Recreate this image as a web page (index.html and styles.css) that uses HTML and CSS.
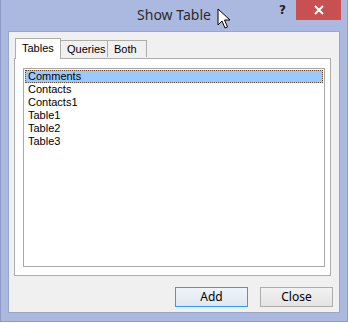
FILE: index.html
```html
<!DOCTYPE html>
<html lang="en">
<head>
    <meta charset="UTF-8">
    <title>Show Table</title>
    <link rel="stylesheet" href="styles.css">
</head>
<body>

    <div class="window">
        <div class="titlebar">
            <span class="title">Show Table</span>
            <span class="help">?</span>
            <span class="close-btn">
                <svg width="10" height="10" viewBox="0 0 10 10"><path d="M1 1 L9 9 M9 1 L1 9" stroke="#fff" stroke-width="2"/></svg>
            </span>
            <!-- mouse pointer -->
            <svg class="cursor" width="14" height="22" viewBox="0 0 14 22">
                <path d="M1 1 L1 17 L5 13 L8 20 L10.5 19 L7.5 12 L13 12 Z" fill="#fff" stroke="#000" stroke-width="1"/>
            </svg>
        </div>

        <div class="client">
            <div class="tabs">
                <div class="tab active">Tables</div>
                <div class="tab">Queries</div>
                <div class="tab">Both</div>
            </div>
            <div class="panel">
                <ul class="listbox">
                    <li class="selected">Comments</li>
                    <li>Contacts</li>
                    <li>Contacts1</li>
                    <li>Table1</li>
                    <li>Table2</li>
                    <li>Table3</li>
                </ul>
            </div>
            <div class="buttons">
                <button class="btn default">Add</button>
                <button class="btn">Close</button>
            </div>
        </div>
    </div>

</body>
</html>
```

FILE: styles.css
```css
body {
    margin: 0;
    padding: 0;
    background-color: #fff;
    font-family: "Liberation Sans", Arial, sans-serif;
}

/* window frame */
.window {
    width: 348px;
    height: 322px;
    box-sizing: border-box;
    background-color: #abb9e1;
    border: 1px solid #8d9bc6;
    border-top: none;
    display: flex;
    flex-direction: column;
}

.titlebar {
    position: relative;
    height: 31px;
    flex-shrink: 0;
}

.title {
    position: absolute;
    left: 0;
    right: 0;
    top: 5px;
    text-align: center;
    font-family: "Noto Sans", "Open Sans", sans-serif;
    font-size: 14px;
    color: #2b2b2b;
}

.help {
    position: absolute;
    left: 278px;
    top: 3px;
    font-family: "DejaVu Sans", sans-serif;
    font-weight: bold;
    font-size: 12px;
    color: #222;
}

.close-btn {
    position: absolute;
    left: 295px;
    top: 0;
    width: 45px;
    height: 20px;
    background-color: #c75050;
    display: flex;
    align-items: center;
    justify-content: center;
}

.cursor {
    position: absolute;
    left: 216px;
    top: 8px;
}

/* client area */
.client {
    margin: 0 7px;
    height: 282px;
    background-color: #f0f0f0;
    border: 1px solid #9aa6c8;
    box-sizing: border-box;
    padding: 6px 8px 0 5px;
    display: flex;
    flex-direction: column;
}

.tabs {
    display: flex;
    align-items: flex-end;
    height: 20px;
    padding-left: 1px;
    position: relative;
    z-index: 1;
}

.tab {
    font-size: 11px;
    color: #000;
    height: 17px;
    line-height: 16px;
    padding: 0 6px;
    box-sizing: border-box;
    background-color: #f0f0f0;
    border: 1px solid #adadad;
    border-bottom: none;
    margin-left: -1px;
    margin-bottom: 1px;
}

.tab:nth-child(2) {
    width: 48px;
}

.tab:nth-child(3) {
    width: 40px;
}

.tab.active {
    height: 21px;
    line-height: 19px;
    width: 46px;
    padding: 0 6px;
    background-color: #fff;
    margin-bottom: -1px;
    margin-left: 0;
    z-index: 2;
}

.panel {
    background-color: #fff;
    border: 1px solid #adadad;
    height: 218px;
    box-sizing: border-box;
    padding: 9px 5px 8px 8px;
}

.listbox {
    list-style: none;
    margin: 0;
    padding: 1px;
    height: 100%;
    box-sizing: border-box;
    border: 1px solid #a9a9a9;
    background-color: #fff;
}

.listbox li {
    font-size: 11px;
    height: 13px;
    line-height: 13px;
    padding-left: 3px;
    color: #000;
}

.listbox li.selected {
    background-color: #99c9ff;
    outline: 1px dotted #6b4a2a;
    outline-offset: -1px;
}

/* bottom buttons */
.buttons {
    display: flex;
    justify-content: flex-end;
    gap: 12px;
    padding-top: 11px;
    margin-right: -2px;
}

.btn {
    width: 73px;
    height: 20px;
    font-family: "Noto Sans", "Open Sans", sans-serif;
    font-size: 12px;
    line-height: 16px;
    color: #000;
    background: linear-gradient(#f2f2f2, #e3e3e3);
    border: 1px solid #adadad;
    padding: 0;
}

.btn.default {
    border-color: #3399ff;
    background: linear-gradient(#eef4fb, #dfe7f0);
}
```
